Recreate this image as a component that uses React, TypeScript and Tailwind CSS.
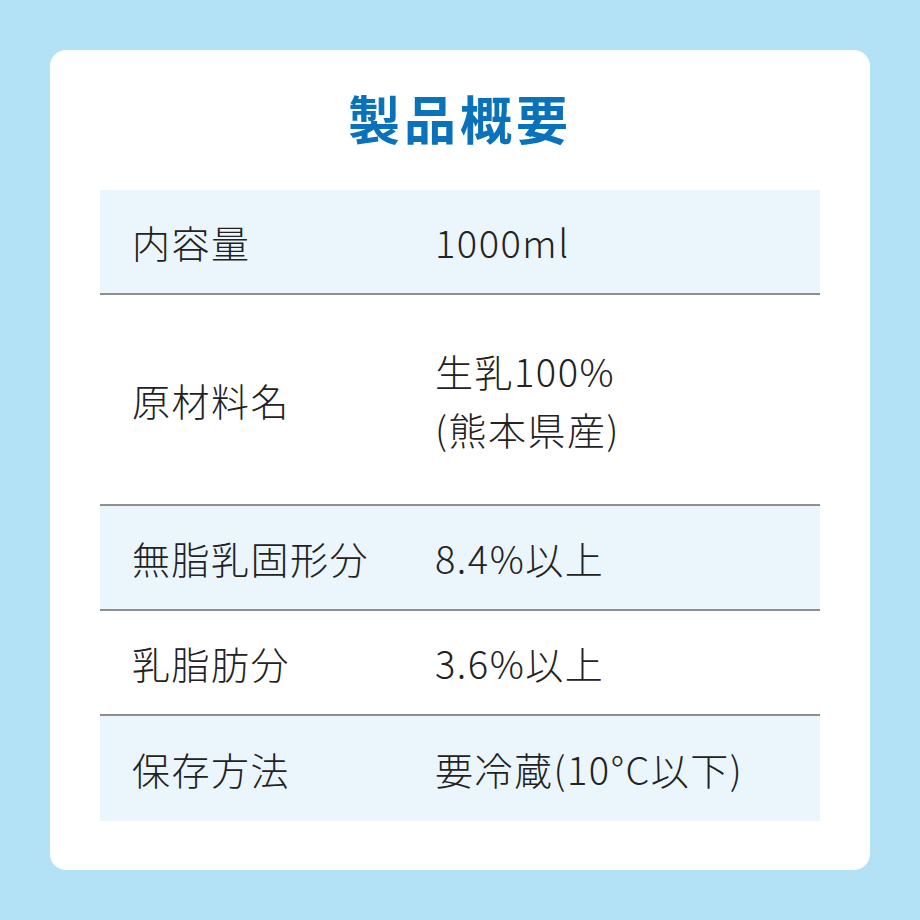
import React from "react";

const rows: { label: string; value: React.ReactNode; bg: boolean; tall?: boolean }[] = [
  { label: "内容量", value: "1000ml", bg: true },
  {
    label: "原材料名",
    value: (
      <>
        生乳100%
        <br />
        (熊本県産)
      </>
    ),
    bg: false,
    tall: true,
  },
  { label: "無脂乳固形分", value: "8.4%以上", bg: true },
  { label: "乳脂肪分", value: "3.6%以上", bg: false },
  { label: "保存方法", value: "要冷蔵(10°C以下)", bg: true },
];

export default function App() {
  return (
    <div
      className="w-[920px] h-[920px] bg-[#b3e1f5] p-[50px]"
      style={{ fontFamily: '"Noto Sans CJK JP", "Noto Sans", sans-serif' }}
    >
      <div className="w-[820px] h-[820px] bg-white rounded-[16px] px-[50px] pt-[36px]">
        <h1 className="text-center text-[52px] leading-[64px] font-bold text-[#0a72ba] tracking-[4px] h-[104px]">
          製品概要
        </h1>
        <div className="flex flex-col">
          {rows.map((r, i) => (
            <div
              key={i}
              className={
                "flex items-center text-[38px] font-light tracking-[1.5px] text-[#222222] " +
                (r.bg ? "bg-[#eaf5fc] " : "bg-white ") +
                (r.tall ? "h-[211px] " : "h-[105px] ") +
                (i < rows.length - 1 ? "border-b-2 border-[#8f8f8f]" : "")
              }
            >
              <div className="w-[335px] pl-[32px] leading-[58px]">{r.label}</div>
              <div className="flex-1 leading-[58px]">{r.value}</div>
            </div>
          ))}
        </div>
      </div>
    </div>
  );
}
